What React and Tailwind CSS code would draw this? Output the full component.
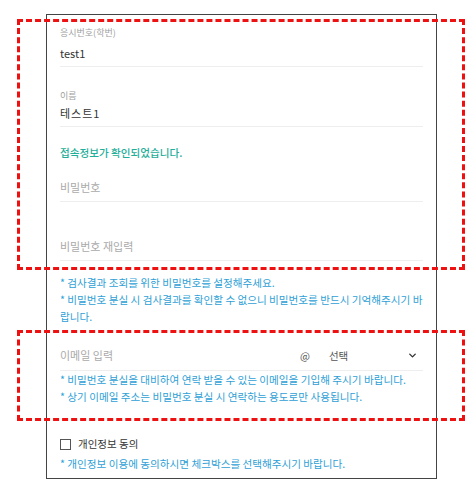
import { ChevronDown } from "lucide-react";

const font = { fontFamily: '"Noto Sans CJK KR", "Noto Sans", sans-serif' };

function Note({ children }) {
  return <p className="break-all text-[10.6px] leading-[17px] text-[#2f9fd6]">{children}</p>;
}

export default function App() {
  return (
    <div className="relative min-h-[484px] bg-white pt-[14px]" style={font}>
      <div className="ml-[46px] w-[391px] border border-[#444] bg-white px-[13px] pt-[11px] pb-[6px]">
        <div className="border-b border-[#eee] pb-[5px]">
          <div className="text-[9px] leading-[14px] text-[#a0a0a0]">응시번호(학번)</div>
          <div className="mt-[5px] text-[11px] leading-[16px] text-[#333]">test1</div>
        </div>
        <div className="mt-[22px] border-b border-[#eee] pb-[5px]">
          <div className="text-[9px] leading-[14px] text-[#a0a0a0]">이름</div>
          <div className="mt-[2px] text-[11px] leading-[16px] tracking-[1px] text-[#333]">테스트1</div>
        </div>
        <p className="mt-[18px] text-[10.6px] leading-[16px] font-medium text-[#1fae9a]">접속정보가 확인되었습니다.</p>
        <input
          className="mt-[11px] block h-[30px] w-full border-b border-[#eee] text-[11px] outline-none placeholder:text-[#aaa]"
          placeholder="비밀번호"
          type="password"
        />
        <input
          className="mt-[29px] block h-[30px] w-full border-b border-[#eee] text-[11px] outline-none placeholder:text-[#aaa]"
          placeholder="비밀번호 재입력"
          type="password"
        />
        <div className="mt-[13px]">
          <Note>* 검사결과 조회를 위한 비밀번호를 설정해주세요.</Note>
          <Note>* 비밀번호 분실 시 검사결과를 확인할 수 없으니 비밀번호를 반드시 기억해주시기 바랍니다.</Note>
        </div>
        <div className="mt-[16px] flex h-[30px] items-center border-b border-[#eee]">
          <input
            className="w-[233px] text-[11px] outline-none placeholder:text-[#aaa]"
            placeholder="이메일 입력"
          />
          <span className="ml-[7px] text-[10.5px] text-[#555]">@</span>
          <div className="ml-[13px] flex h-full flex-1 items-center">
            <span className="ml-[6px] flex-1 text-[10.5px] text-[#555]">선택</span>
            <ChevronDown className="mr-[5px] h-[11px] w-[11px] text-[#333]" strokeWidth={3} />
          </div>
        </div>
        <div>
          <Note>* 비밀번호 분실을 대비하여 연락 받을 수 있는 이메일을 기입해 주시기 바랍니다.</Note>
          <Note>* 상기 이메일 주소는 비밀번호 분실 시 연락하는 용도로만 사용됩니다.</Note>
        </div>
        <label className="mt-[31px] flex items-center gap-[7px] text-[10.5px] leading-[16px] text-[#333]">
          <input type="checkbox" className="h-[11px] w-[11px] appearance-none border border-[#555] bg-white" />
          개인정보 동의
        </label>
        <div className="mt-[3px]">
          <Note>* 개인정보 이용에 동의하시면 체크박스를 선택해주시기 바랍니다.</Note>
        </div>
      </div>
      <div className="pointer-events-none absolute left-[17px] top-[19px] h-[251px] w-[448px] border-[3px] border-dashed border-[#ee1111]" />
      <div className="pointer-events-none absolute left-[17px] top-[330px] h-[91px] w-[448px] border-[3px] border-dashed border-[#ee1111]" />
    </div>
  );
}
